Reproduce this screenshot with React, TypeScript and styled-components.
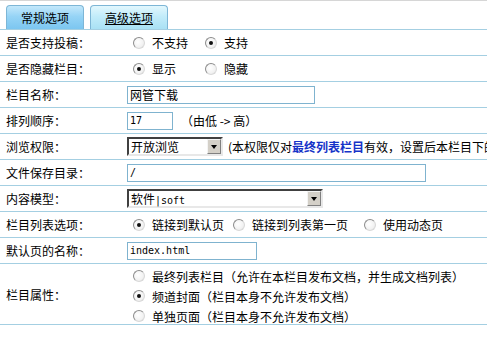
import React from 'react';
import styled, { createGlobalStyle } from 'styled-components';

const LINE = '#a4cfe2';

const Global = createGlobalStyle`
  html, body { margin: 0; padding: 0; background: #fff; overflow: hidden; }
  body {
    font-family: "Noto Sans CJK SC", "Noto Sans", sans-serif;
    font-size: 12px;
    color: #000;
  }
`;

const Page = styled.div`
  width: 640px;
  border-top: 1px solid #d6d6d6;
`;

const TabBar = styled.div`
  display: flex;
  align-items: flex-end;
  gap: 6px;
  padding-left: 6px;
  height: 29px;
  box-sizing: border-box;
  border-bottom: 1px solid ${LINE};
`;

const Tab = styled.div<{ $active?: boolean }>`
  width: 78px;
  height: 24px;
  box-sizing: border-box;
  display: flex;
  align-items: center;
  justify-content: center;
  border: 1px solid #7db6d6;
  border-bottom: none;
  border-radius: 4px 4px 0 0;
  background: ${(p) =>
    p.$active
      ? 'linear-gradient(#c4e8fb 0%, #96d4f6 45%, #7cc6f0 100%)'
      : 'linear-gradient(#e2f7fd 0%, #c2ecfa 45%, #a9e1f4 100%)'};
  text-decoration: ${(p) => (p.$active ? 'none' : 'underline')};
  color: #000;
`;

const Row = styled.div<{ $h?: number }>`
  display: flex;
  align-items: center;
  height: ${(p) => p.$h ?? 25}px;
  border-bottom: 1px solid ${LINE};
  white-space: nowrap;
`;

const Label = styled.div`
  width: 127px;
  flex: none;
  padding-left: 6px;
  box-sizing: border-box;
`;

const Value = styled.div`
  display: flex;
  align-items: center;
  flex: 1;
`;

const Stack = styled.div`
  display: flex;
  flex-direction: column;
  align-self: flex-start;
  padding-top: 2px;
`;

const StackLine = styled.div`
  height: 20px;
  display: flex;
  align-items: center;
`;

const Option = styled.label<{ $w?: number }>`
  display: inline-flex;
  align-items: center;
  ${(p) => (p.$w ? `width: ${p.$w}px;` : 'margin-right: 8px;')}
`;

const Radio = styled.span<{ $on?: boolean }>`
  width: 12px;
  height: 12px;
  box-sizing: border-box;
  margin-left: 6px;
  margin-right: 7px;
  border-radius: 50%;
  border: 1px solid;
  border-color: #8c8c8c #d8d8d8 #d8d8d8 #8c8c8c;
  background: radial-gradient(circle at 40% 40%, #ffffff 0%, #f2f2f2 60%, #dcdcdc 100%);
  display: flex;
  align-items: center;
  justify-content: center;
  &::after {
    content: '';
    width: 4px;
    height: 4px;
    border-radius: 50%;
    background: #111;
    display: ${(p) => (p.$on ? 'block' : 'none')};
  }
`;

const TextBox = styled.div<{ $w: number }>`
  width: ${(p) => p.$w}px;
  height: 18px;
  box-sizing: border-box;
  border: 1px solid #7fb3cf;
  background: #fff;
  display: flex;
  align-items: center;
  padding-left: 2px;
`;

const Mono = styled.span`
  font-family: "DejaVu Sans Mono", "Liberation Mono", monospace;
  font-size: 10px;
`;

const SelectBox = styled.div<{ $w: number }>`
  width: ${(p) => p.$w}px;
  height: 19px;
  box-sizing: border-box;
  border: 2px solid;
  border-color: #404040 #e8e8e8 #e8e8e8 #404040;
  background: #fff;
  display: flex;
  align-items: center;
  padding-left: 2px;
`;

const SelectText = styled.span`
  flex: 1;
`;

const SelectBtn = styled.span`
  width: 14px;
  height: 15px;
  box-sizing: border-box;
  border: 1px solid;
  border-color: #f4f4f4 #808080 #808080 #f4f4f4;
  background: #d4d0c8;
  display: flex;
  align-items: center;
  justify-content: center;
  &::after {
    content: '';
    border-left: 3px solid transparent;
    border-right: 3px solid transparent;
    border-top: 4px solid #000;
  }
`;

const Note = styled.span<{ $ml?: number }>`
  margin-left: ${(p) => p.$ml ?? 8}px;
`;

const Strong = styled.b`
  color: #1533c8;
`;

function mixed(text: string) {
  return text.split(/([\x00-\x7f]+)/).map((part, i) =>
    /^[\x00-\x7f]+$/.test(part) ? <Mono key={i}>{part}</Mono> : part ? <span key={i}>{part}</span> : null
  );
}

const R = ({ on, w, children }: { on?: boolean; w?: number; children: React.ReactNode }) => (
  <Option $w={w}>
    <Radio $on={on} />
    {children}
  </Option>
);

export default function App() {
  return (
    <Page>
      <Global />
      <TabBar>
        <Tab $active>常规选项</Tab>
        <Tab>高级选项</Tab>
      </TabBar>
      <Row>
        <Label>是否支持投稿：</Label>
        <Value>
          <R w={72}>不支持</R>
          <R on>支持</R>
        </Value>
      </Row>
      <Row>
        <Label>是否隐藏栏目：</Label>
        <Value>
          <R on w={72}>显示</R>
          <R>隐藏</R>
        </Value>
      </Row>
      <Row>
        <Label>栏目名称：</Label>
        <Value>
          <TextBox $w={188}>网管下载</TextBox>
        </Value>
      </Row>
      <Row>
        <Label>排列顺序：</Label>
        <Value>
          <TextBox $w={46}>{mixed('17')}</TextBox>
          <Note>（由低 -&gt; 高）</Note>
        </Value>
      </Row>
      <Row>
        <Label>浏览权限：</Label>
        <Value>
          <SelectBox $w={96}>
            <SelectText>开放浏览</SelectText>
            <SelectBtn />
          </SelectBox>
          <Note $ml={5}>
            (本权限仅对<Strong>最终列表栏目</Strong>有效，设置后本栏目下的所有文档均使用该权限)
          </Note>
        </Value>
      </Row>
      <Row>
        <Label>文件保存目录：</Label>
        <Value>
          <TextBox $w={299}>{mixed('/')}</TextBox>
        </Value>
      </Row>
      <Row>
        <Label>内容模型：</Label>
        <Value>
          <SelectBox $w={196}>
            <SelectText>{mixed('软件|soft')}</SelectText>
            <SelectBtn />
          </SelectBox>
        </Value>
      </Row>
      <Row>
        <Label>栏目列表选项：</Label>
        <Value>
          <R on w={100}>链接到默认页</R>
          <R w={131}>链接到列表第一页</R>
          <R>使用动态页</R>
        </Value>
      </Row>
      <Row>
        <Label>默认页的名称：</Label>
        <Value>
          <TextBox $w={130}>{mixed('index.html')}</TextBox>
        </Value>
      </Row>
      <Row $h={60}>
        <Label>栏目属性：</Label>
        <Stack>
          <StackLine>
            <R>最终列表栏目（允许在本栏目发布文档，并生成文档列表）</R>
          </StackLine>
          <StackLine>
            <R on>频道封面（栏目本身不允许发布文档）</R>
          </StackLine>
          <StackLine>
            <R>单独页面（栏目本身不允许发布文档）</R>
          </StackLine>
        </Stack>
      </Row>
    </Page>
  );
}
